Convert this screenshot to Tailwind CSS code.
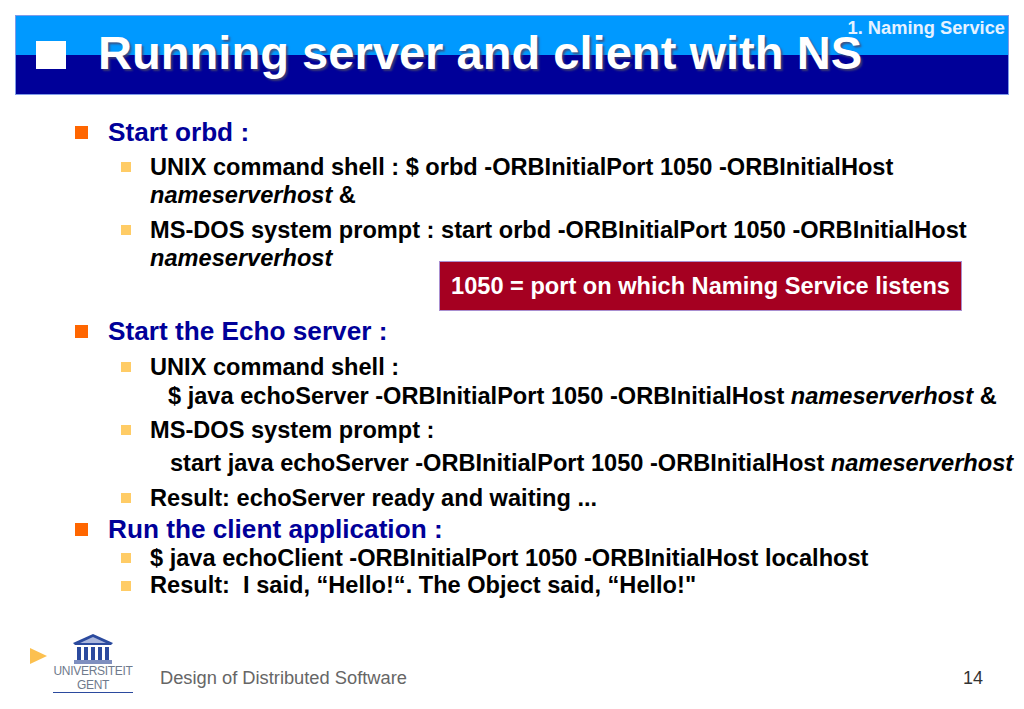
<!DOCTYPE html>
<html lang="en">
<head>
    <meta charset="UTF-8">
    <title>Running server and client with NS</title>
    <script src="https://cdn.jsdelivr.net/npm/@tailwindcss/browser@4"></script>
</head>
<body class="bg-white">
    <div class="relative w-[1024px] h-[709px] overflow-hidden bg-white font-['Liberation_Sans',Arial,sans-serif]">
        <!-- title bar -->
        <div class="relative ml-[15px] mt-[15px] w-[994px] h-[80px] border border-[#7f9be8] flex flex-col">
            <div class="h-[39px] bg-[#0099ff]"></div>
            <div class="flex-1 bg-[#000099]"></div>
            <div class="absolute left-[20px] top-[25px] w-[30px] h-[28px] bg-white"></div>
            <h1 class="absolute left-[82px] top-[10px] text-[47.1px] leading-[54px] font-bold text-white whitespace-nowrap [text-shadow:2px_2px_2px_rgba(70,70,110,0.8)]">Running server and client with NS</h1>
            <div class="absolute right-[3px] top-[1px] text-[18.3px] leading-[22px] font-bold text-[#e6f2ff] whitespace-nowrap">1. Naming Service</div>
        </div>

        <!-- bullets -->
        <div class="absolute left-0 top-[118px] w-full text-black font-bold whitespace-nowrap">
            <div class="flex items-center h-[28px] leading-[28px] pl-[75px] text-[#000099] text-[26.2px]"><span class="w-[13px] h-[13px] bg-[#ff6600] mr-[20px]"></span>Start orbd :</div>
            <div class="flex items-center h-[28px] leading-[28px] pl-[121px] mt-[7px] text-[23.6px]"><span class="w-[10px] h-[10px] bg-[#ffcc66] mr-[19px]"></span>UNIX command shell : $ orbd -ORBInitialPort 1050 -ORBInitialHost</div>
            <div class="h-[28px] pl-[150px] text-[23.6px] leading-[28px]"><i>nameserverhost</i> &amp;</div>
            <div class="flex items-center h-[28px] leading-[28px] pl-[121px] mt-[7px] text-[23.6px]"><span class="w-[10px] h-[10px] bg-[#ffcc66] mr-[19px]"></span>MS-DOS system prompt : start orbd -ORBInitialPort 1050 -ORBInitialHost</div>
            <div class="h-[28px] pl-[150px] text-[23.6px] leading-[28px]"><i>nameserverhost</i></div>

            <div class="flex items-center h-[28px] leading-[28px] pl-[75px] mt-[45px] text-[#000099] text-[26.2px]"><span class="w-[13px] h-[13px] bg-[#ff6600] mr-[20px]"></span>Start the Echo server :</div>
            <div class="flex items-center h-[28px] leading-[28px] pl-[121px] mt-[8px] text-[23.6px]"><span class="w-[10px] h-[10px] bg-[#ffcc66] mr-[19px]"></span>UNIX command shell :</div>
            <div class="h-[28px] pl-[168px] mt-[1px] text-[23.6px] leading-[28px]">$ java echoServer -ORBInitialPort 1050 -ORBInitialHost <i>nameserverhost</i> &amp;</div>
            <div class="flex items-center h-[28px] leading-[28px] pl-[121px] mt-[6px] text-[23.6px]"><span class="w-[10px] h-[10px] bg-[#ffcc66] mr-[19px]"></span>MS-DOS system prompt :</div>
            <div class="h-[28px] pl-[170px] mt-[5px] text-[23.6px] leading-[28px]">start java echoServer -ORBInitialPort 1050 -ORBInitialHost <i>nameserverhost</i></div>
            <div class="flex items-center h-[28px] leading-[28px] pl-[121px] mt-[7px] text-[23.6px]"><span class="w-[10px] h-[10px] bg-[#ffcc66] mr-[19px]"></span>Result: echoServer ready and waiting ...</div>

            <div class="flex items-center h-[28px] leading-[28px] pl-[75px] mt-[3px] text-[#000099] text-[26.2px]"><span class="w-[13px] h-[13px] bg-[#ff6600] mr-[20px]"></span>Run the client application :</div>
            <div class="flex items-center h-[28px] leading-[28px] pl-[121px] mt-[1px] text-[23.6px]"><span class="w-[10px] h-[10px] bg-[#ffcc66] mr-[19px]"></span>$ java echoClient -ORBInitialPort 1050 -ORBInitialHost localhost</div>
            <div class="flex items-center h-[27px] leading-[27px] pl-[121px] text-[23.6px]"><span class="w-[10px] h-[10px] bg-[#ffcc66] mr-[19px]"></span>Result:&nbsp; I said, “Hello!“. The Object said, “Hello!"</div>
        </div>

        <!-- callout -->
        <div class="absolute left-[439px] top-[261px] w-[523px] h-[50px] bg-[#a50021] border border-[#a98fd0] text-white font-bold text-[23.6px] leading-[48px] text-center whitespace-nowrap">1050 = port on which Naming Service listens</div>

        <!-- footer -->
        <div class="absolute left-[30px] top-[634px] w-[953px] h-[60px] flex items-start">
            <svg class="mt-[14px] w-[17px] h-[16px]" viewBox="0 0 17 16"><polygon points="0,0 17,8 0,16" fill="#fcc04f"/></svg>
            <div class="ml-[6px] w-[80px] flex flex-col items-center">
                <svg class="w-[40px] h-[30px]" viewBox="0 0 40 30">
                    <polygon points="20,0 40,9 38,11 2,11 0,9" fill="#2b4a9e"/>
                    <polygon points="20,3 33,9 7,9" fill="#aab6dc"/>
                    <g fill="#2b4a9e">
                        <rect x="4" y="13" width="4" height="13"/>
                        <rect x="11" y="13" width="4" height="13"/>
                        <rect x="18" y="13" width="4" height="13"/>
                        <rect x="25" y="13" width="4" height="13"/>
                        <rect x="32" y="13" width="4" height="13"/>
                    </g>
                    <rect x="1" y="26" width="38" height="4" fill="#7f8fbf"/>
                </svg>
                <div class="text-[12px] leading-[14px] text-[#6f7a8c] tracking-[-0.3px] text-center whitespace-nowrap">UNIVERSITEIT<br>GENT</div>
                <div class="w-[80px] h-[1px] bg-[#2b4a9e]"></div>
            </div>
            <div class="ml-[27px] mt-[33px] text-[18.3px] leading-[22px] text-[#666666] whitespace-nowrap">Design of Distributed Software</div>
            <div class="ml-auto mt-[33px] text-[18px] leading-[22px] text-[#333333]">14</div>
        </div>
    </div>
</body>
</html>
